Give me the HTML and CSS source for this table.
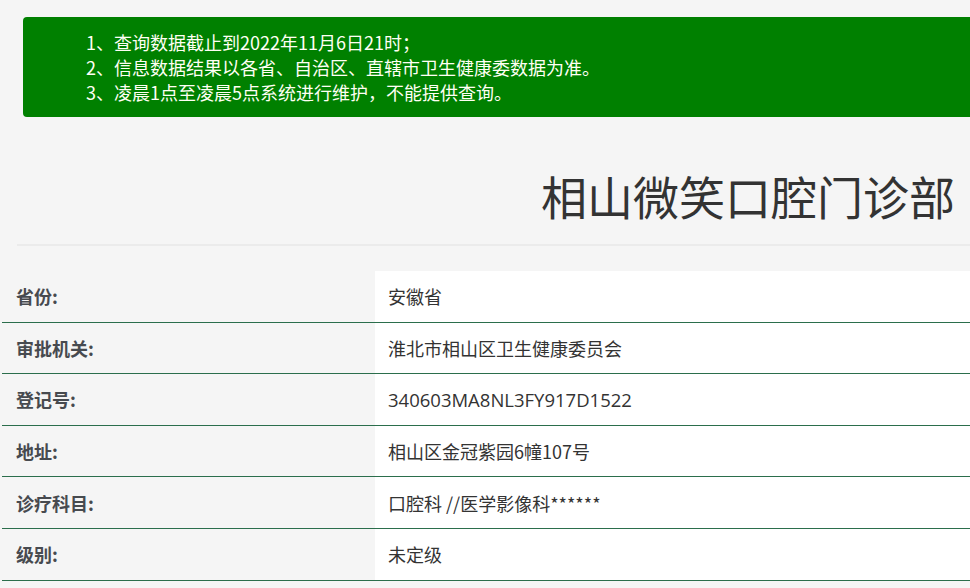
FILE: index.html
```html
<!DOCTYPE html>
<html lang="zh-CN">
<head>
<meta charset="utf-8">
<title>相山微笑口腔门诊部</title>
<link rel="stylesheet" href="styles.css">
</head>
<body>
<div class="page">
  <div class="notice">
    <p>1、查询数据截止到2022年11月6日21时；</p>
    <p>2、信息数据结果以各省、自治区、直辖市卫生健康委数据为准。</p>
    <p>3、凌晨1点至凌晨5点系统进行维护，不能提供查询。</p>
  </div>
  <h1 class="title">相山微笑口腔门诊部</h1>
  <div class="info">
    <div class="row"><div class="label">省份:</div><div class="value">安徽省</div></div>
    <div class="row"><div class="label">审批机关:</div><div class="value">淮北市相山区卫生健康委员会</div></div>
    <div class="row"><div class="label">登记号:</div><div class="value code">340603MA8NL3FY917D1522</div></div>
    <div class="row"><div class="label">地址:</div><div class="value">相山区金冠紫园6幢107号</div></div>
    <div class="row"><div class="label">诊疗科目:</div><div class="value">口腔科 //医学影像科******</div></div>
    <div class="row"><div class="label">级别:</div><div class="value">未定级</div></div>
  </div>
</div>
</body>
</html>
```
FILE: styles.css
```css
html, body {
  margin: 0;
  padding: 0;
  background: #f5f5f5;
  overflow: hidden;
}
body {
  font-family: "Noto Sans CJK SC", "Noto Sans", sans-serif;
  color: #333;
}
.page {
  width: 970px;
  padding-top: 17px;
}
.notice {
  margin-left: 23px;
  margin-right: -20px;
  height: 100px;
  box-sizing: border-box;
  padding: 13px 0 0 63px;
  background: #008000;
  border-radius: 4px;
  color: #fffff4;
  font-size: 18px;
  line-height: 25px;
}
.notice p {
  margin: 0;
}
.title {
  margin: 49px 0 0 17px;
  padding: 0 15px 20px 0;
  border-bottom: 2px solid #ebebeb;
  text-align: right;
  font-size: 46px;
  font-weight: normal;
  line-height: 58px;
  color: #333;
}
.info {
  margin: 25px 0 0 2px;
}
.row {
  display: grid;
  grid-template-columns: 373px 1fr;
  height: 51.6px;
  box-sizing: border-box;
  border-bottom: 1.5px solid #2b6e4c;
}
.label {
  display: flex;
  align-items: center;
  padding-left: 14px;
  font-size: 18px;
  font-weight: bold;
  color: #474a4f;
}
.value {
  display: flex;
  align-items: center;
  padding-left: 13px;
  background: #fff;
  font-size: 18px;
  color: #333;
}
.code {
  font-family: "Open Sans", "Noto Sans CJK SC", sans-serif;
  font-size: 18.5px;
}
```
